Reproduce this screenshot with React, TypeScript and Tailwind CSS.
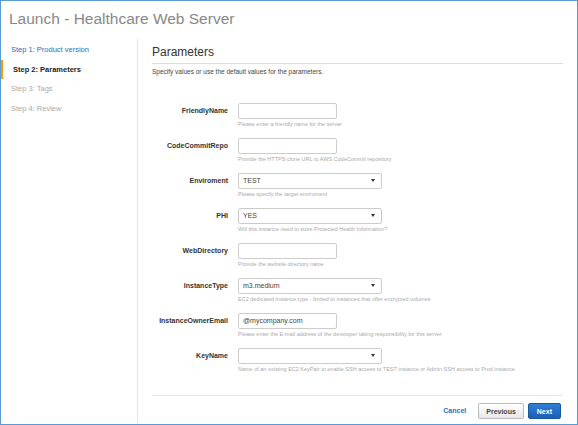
import React from 'react';

const fields = [
  { label: 'FriendlyName', kind: 'text', value: '', hint: 'Please enter a friendly name for the server' },
  { label: 'CodeCommitRepo', kind: 'text', value: '', hint: 'Provide the HTTPS clone URL to AWS CodeCommit repository' },
  { label: 'Enviroment', kind: 'select', value: 'TEST', hint: 'Please specify the target enviroment' },
  { label: 'PHI', kind: 'select', value: 'YES', hint: 'Will this instance need to store Protected Health Information?' },
  { label: 'WebDirectory', kind: 'text', value: '', hint: 'Provide the website directory name' },
  { label: 'InstanceType', kind: 'select', value: 'm3.medium', hint: 'EC2 dedicated instance type - limited to instances that offer encrypted volumes' },
  { label: 'InstanceOwnerEmail', kind: 'text', value: '@mycompany.com', hint: 'Please enter the E-mail address of the developer taking responsibility for this server' },
  { label: 'KeyName', kind: 'select', value: '', hint: 'Name of an existing EC2 KeyPair to enable SSH access to TEST instance or Admin SSH access to Prod instance' },
];

const steps = ['Step 1: Product version', 'Step 2: Parameters', 'Step 3: Tags', 'Step 4: Review'];

export default function App() {
  return (
    <div className="w-[578px] h-[425px] bg-white border border-[#5b9bd5] overflow-hidden flex flex-col" style={{ fontFamily: '"Liberation Sans", Arial, sans-serif' }}>
      <h1 className="text-[15.5px] text-[#888] pl-[8px] pt-[9px] h-[38px] leading-[18px]">Launch - Healthcare Web Server</h1>
      <div className="flex flex-1 min-h-0">
        {/* Steps */}
        <div className="w-[137px] border-r border-[#e5e5e5] text-[7.5px] leading-none pt-[1px]">
          {steps.map((s, i) => (
            <div key={s} className={`h-[19.5px] flex items-center pl-[10px] ${i === 1 ? 'border-l-2 border-[#f90] pl-[8px] font-bold text-[#222]' : i === 0 ? 'text-[#1f6fc5]' : 'text-[#aaa]'}`}>
              {s}
            </div>
          ))}
        </div>
        {/* Main */}
        <div className="flex-1 px-[14px] pt-[6px] flex flex-col">
          <div className="text-[12px] leading-[14px] text-[#333] border-b border-[#ddd] pb-[4px] mb-[5px]">Parameters</div>
          <div className="text-[6.5px] leading-none text-[#444]">Specify values or use the default values for the parameters.</div>
          <div className="mt-[27px] flex flex-col gap-[9px]">
            {fields.map(f => (
              <div key={f.label} className="flex">
                <div className="w-[86px] text-right text-[7px] leading-none font-bold text-[#333] pt-[4px] pr-[10px]">{f.label}</div>
                <div>
                  <div className={`h-[16px] border border-[#ccc] rounded-[2px] flex items-center justify-between px-[4px] text-[7px] leading-none text-[#444] ${f.kind === 'select' ? 'w-[144px]' : 'w-[99px]'}`}>
                    <span>{f.value}</span>
                    {f.kind === 'select' && <span className="w-0 h-0 border-l-[2.5px] border-r-[2.5px] border-t-[3px] border-l-transparent border-r-transparent border-t-[#333] mr-[2px]" />}
                  </div>
                  <div className="text-[5.5px] leading-none text-[#aaa] mt-[3px] h-[7px] whitespace-nowrap">{f.hint}</div>
                </div>
              </div>
            ))}
          </div>
          <div className="mt-auto border-t border-[#e5e5e5] mb-[5px] pt-[7px] flex justify-end items-center gap-[4px] pr-[2px]">
            <span className="text-[7px] font-bold text-[#1f6fc5] mr-[8px]">Cancel</span>
            <button className="h-[16px] px-[7px] text-[7px] leading-none font-bold text-[#444] border border-[#bbb] rounded-[2px] bg-gradient-to-b from-white to-[#e8e8e8]">Previous</button>
            <button className="h-[16px] px-[8px] text-[7px] leading-none font-bold text-white border border-[#1a57a3] rounded-[2px] bg-gradient-to-b from-[#2f7fd6] to-[#1a5fb4]">Next</button>
          </div>
        </div>
      </div>
    </div>
  );
}
